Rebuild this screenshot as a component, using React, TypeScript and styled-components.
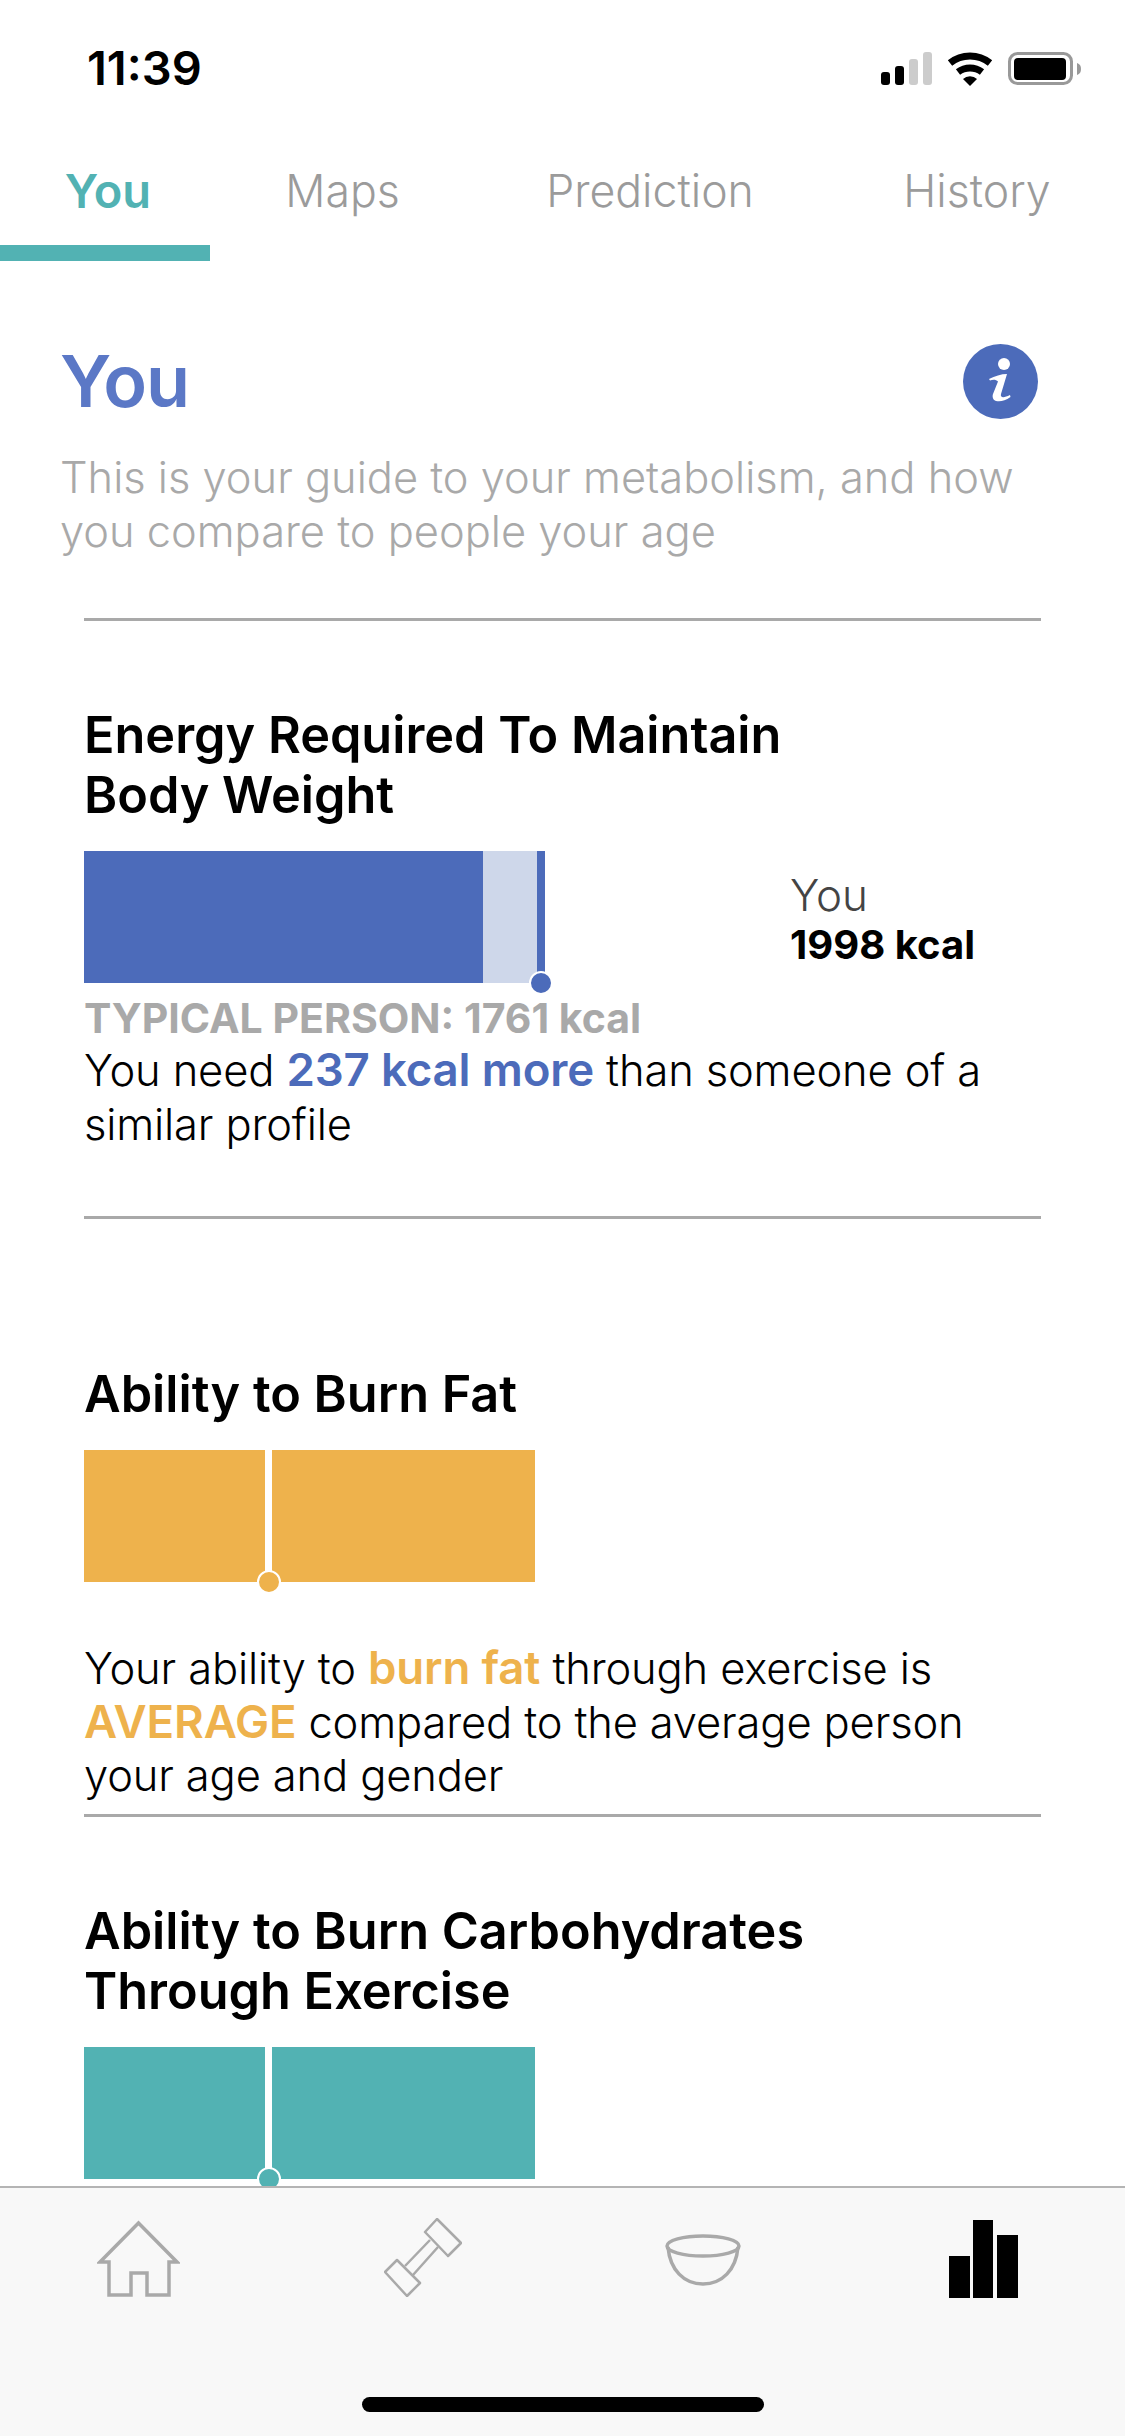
import React from 'react';
import styled, { createGlobalStyle } from 'styled-components';

const BLUE = '#4c6bba';
const ORANGE = '#eeb24c';
const TEAL = '#52b2b3';
const GREY = '#a9a9a9';

const GlobalStyle = createGlobalStyle`
  html, body {
    margin: 0;
    padding: 0;
    background: #fff;
  }
  * {
    box-sizing: border-box;
  }
`;

const Screen = styled.div`
  width: 1125px;
  height: 2436px;
  display: flex;
  flex-direction: column;
  overflow: hidden;
  background: #fff;
  color: #000;
  font-family: Inter, "Liberation Sans", sans-serif;
`;

const StatusBar = styled.div`
  height: 133px;
  flex: none;
  display: flex;
  justify-content: space-between;
  padding: 45px 44px 0 87px;
`;

const Clock = styled.div`
  font-size: 47px;
  line-height: 46px;
  font-weight: 600;
`;

const StatusIcons = styled.svg`
  display: block;
  margin-top: 7px;
`;

const Tabs = styled.div`
  flex: none;
  display: grid;
  grid-template-columns: 210px 265px 350px 304px;
  height: 128px;
`;

const Tab = styled.div<{ $active?: boolean }>`
  text-align: center;
  padding: 31px 0 0 ${p => (p.$active ? 6 : 0)}px;
  font-size: ${p => (p.$active ? 47 : 44.6)}px;
  line-height: 54px;
  font-weight: ${p => (p.$active ? 600 : 300)};
  color: ${p => (p.$active ? TEAL : '#9b9b9b')};
  border-bottom: 16px solid ${p => (p.$active ? TEAL : 'transparent')};
`;

const Scroll = styled.div`
  flex: 1;
  min-height: 0;
  overflow: hidden;
`;

const Intro = styled.div`
  padding: 81px 87px 0 60px;
`;

const IntroHead = styled.div`
  display: flex;
  justify-content: space-between;
  align-items: center;
  height: 78px;
`;

const PageTitle = styled.h1`
  margin: 0;
  font-size: 72px;
  line-height: 78px;
  font-weight: 600;
  letter-spacing: -1px;
  color: #5b78c6;
`;

const InfoButton = styled.div`
  width: 75px;
  height: 75px;
  line-height: 0;
`;

const IntroText = styled.p`
  margin: 31px 0 0;
  font-size: 43.4px;
  line-height: 53.5px;
  font-weight: 300;
  color: #a9a9a9;
`;

const Rule = styled.div<{ $top?: number }>`
  height: 3px;
  margin: ${p => p.$top ?? 0}px 84px 0;
  background: ${GREY};
`;

const Section = styled.section<{ $top: number; $bottom: number }>`
  padding: ${p => p.$top}px 84px ${p => p.$bottom}px 84px;
`;

const Title = styled.h2`
  margin: 0;
  max-width: 760px;
  font-size: 50.4px;
  line-height: 60px;
  font-weight: 600;
`;

const ChartRow = styled.div`
  display: flex;
  align-items: flex-start;
  margin: 26px 0 0;
`;

const Bar = styled.div<{ $width: number }>`
  position: relative;
  display: flex;
  width: ${p => p.$width}px;
  height: 132px;
  flex: none;
`;

const Segment = styled.div<{ $color: string; $width?: number }>`
  background: ${p => p.$color};
  flex: ${p => (p.$width ? `0 0 ${p.$width}px` : '1')};
`;

const Dot = styled.span<{ $color: string; $left: number }>`
  position: absolute;
  left: ${p => p.$left}px;
  bottom: -12px;
  width: 24px;
  height: 24px;
  border-radius: 50%;
  background: ${p => p.$color};
  border: 2px solid #fff;
`;

const YouLabel = styled.div`
  margin: 19px 0 0 245px;
  font-size: 44px;
  line-height: 50px;
  font-weight: 300;
  color: #444;
`;

const YouValue = styled.div`
  font-size: 40px;
  line-height: 50px;
  font-weight: 700;
  color: #000;
`;

const Typical = styled.div`
  margin-top: 12px;
  margin-bottom: 3px;
  font-size: 41px;
  line-height: 46px;
  font-weight: 700;
  color: ${GREY};
`;

const Body = styled.p<{ $top?: number }>`
  margin: ${p => p.$top ?? 0}px 0 0;
  font-size: 43.5px;
  line-height: 53.5px;
  font-weight: 300;
  letter-spacing: -0.15px;
`;

const Strong = styled.strong<{ $color: string }>`
  font-size: 45.6px;
  line-height: 1;
  font-weight: 600;
  color: ${p => p.$color};
`;

const TabBar = styled.div`
  flex: none;
  height: 250px;
  position: relative;
  background: #f8f8f8;
  border-top: 2px solid #b4b4b4;
  display: flex;
  align-items: flex-start;
`;

const NavItem = styled.div<{ $left: number; $top: number }>`
  margin-left: ${p => p.$left}px;
  margin-top: ${p => p.$top}px;
  flex: none;
  line-height: 0;
`;

const HomeIndicator = styled.div`
  position: absolute;
  left: 362px;
  bottom: 24px;
  width: 402px;
  height: 15px;
  border-radius: 8px;
  background: #000;
`;

const Signal = () => (
  <StatusIcons width="200" height="34" viewBox="0 0 200 34">
    <rect x="0" y="20" width="9" height="13" rx="3" fill="#000" />
    <rect x="14" y="14" width="9" height="19" rx="3" fill="#000" />
    <rect x="28" y="7" width="9" height="26" rx="3" fill="#ccc" />
    <rect x="42" y="0" width="9" height="33" rx="3" fill="#ccc" />
    <g fill="none" stroke="#000" strokeWidth="7">
      <path d="M69 11 A32 32 0 0 1 109 11" />
      <path d="M77 20 A20 20 0 0 1 101 20" />
    </g>
    <path d="M82 27 A10 10 0 0 1 96 27 L89 34 Z" fill="#000" />
    <rect x="128.5" y="1.5" width="62" height="30" rx="8" fill="none" stroke="#999" strokeWidth="3" />
    <rect x="133" y="6" width="52" height="22" rx="4" fill="#000" />
    <path d="M196 11 C199 12 200 14 200 17 C200 20 199 22 196 23 Z" fill="#999" />
  </StatusIcons>
);

const InfoIcon = () => (
  <svg width="75" height="75" viewBox="0 0 75 75">
    <circle cx="37.5" cy="37.5" r="37.5" fill={BLUE} />
    <circle cx="41" cy="20" r="6" fill="#fff" />
    <path
      d="M26 35 C32 32 38 30 44 30 L38 50 C37 54 41 54 47 51 L47.5 53 C42 57 37 58 33 57 C30 56 29 53 30 50 L35 37.5 C33 35.5 30 35.5 27 36.5 Z"
      fill="#fff"
    />
  </svg>
);

const HomeIcon = () => (
  <svg width="83" height="78" viewBox="0 0 83 78" fill="none" stroke={GREY} strokeWidth="3.5">
    <path d="M41.5 3 L80 42 H72 V75 H50 V53 H34 V75 H12 V42 H3 Z" />
  </svg>
);

const DumbbellIcon = () => (
  <svg width="78" height="79" viewBox="0 0 78 79" fill="none" stroke={GREY} strokeWidth="2.5" strokeLinejoin="round">
    <path d="M53 1 L77 25 L64 38 L41 14 Z" />
    <path d="M13 42 L36 65 L23 78 L1 54 Z" />
    <path d="M46 22 L21 48 M54 29 L29 57" />
  </svg>
);

const BowlIcon = () => (
  <svg width="78" height="52" viewBox="0 0 78 52" fill="none" stroke={GREY} strokeWidth="3.5">
    <ellipse cx="39" cy="12" rx="36" ry="10" />
    <path d="M4 13 C6 36 20 50 39 50 C58 50 72 36 74 13" />
  </svg>
);

const StatsIcon = () => (
  <svg width="69" height="78" viewBox="0 0 69 78" fill="#000">
    <rect x="0" y="36" width="21" height="42" />
    <rect x="24" y="0" width="20" height="78" />
    <rect x="48" y="15" width="21" height="63" />
  </svg>
);

export default function App() {
  return (
    <Screen>
      <GlobalStyle />
      <StatusBar>
        <Clock>11:39</Clock>
        <Signal />
      </StatusBar>
      <Tabs>
        <Tab $active>You</Tab>
        <Tab>Maps</Tab>
        <Tab>Prediction</Tab>
        <Tab>History</Tab>
      </Tabs>
      <Scroll>
        <Intro>
          <IntroHead>
            <PageTitle>You</PageTitle>
            <InfoButton><InfoIcon /></InfoButton>
          </IntroHead>
          <IntroText>
            This is your guide to your metabolism, and how
            <br />
            you compare to people your age
          </IntroText>
        </Intro>
        <Rule $top={60} />
        <Section $top={84} $bottom={65}>
          <Title>Energy Required To Maintain Body Weight</Title>
          <ChartRow>
            <Bar $width={461}>
              <Segment $color={BLUE} $width={399} />
              <Segment $color="#ced7ea" $width={54} />
              <Segment $color={BLUE} />
              <Dot $color={BLUE} $left={445} />
            </Bar>
            <YouLabel>
              You
              <YouValue>1998 kcal</YouValue>
            </YouLabel>
          </ChartRow>
          <Typical>TYPICAL PERSON: 1761 kcal</Typical>
          <Body>
            You need <Strong $color={BLUE}>237 kcal more</Strong> than someone of a similar profile
          </Body>
        </Section>
        <Rule />
        <Section $top={145} $bottom={11}>
          <Title>Ability to Burn Fat</Title>
          <ChartRow>
            <Bar $width={451}>
              <Segment $color={ORANGE} $width={181} />
              <Segment $color="#fff" $width={7} />
              <Segment $color={ORANGE} />
              <Dot $color={ORANGE} $left={173} />
            </Bar>
          </ChartRow>
          <Body $top={60}>
            Your ability to <Strong $color={ORANGE}>burn fat</Strong> through exercise is{' '}
            <Strong $color={ORANGE}>AVERAGE</Strong> compared to the average person your age and gender
          </Body>
        </Section>
        <Rule />
        <Section $top={84} $bottom={0}>
          <Title>Ability to Burn Carbohydrates Through Exercise</Title>
          <ChartRow>
            <Bar $width={451}>
              <Segment $color={TEAL} $width={181} />
              <Segment $color="#fff" $width={7} />
              <Segment $color={TEAL} />
              <Dot $color={TEAL} $left={173} />
            </Bar>
          </ChartRow>
        </Section>
      </Scroll>
      <TabBar>
        <NavItem $left={97} $top={32}><HomeIcon /></NavItem>
        <NavItem $left={204} $top={30}><DumbbellIcon /></NavItem>
        <NavItem $left={202} $top={46}><BowlIcon /></NavItem>
        <NavItem $left={207} $top={32}><StatsIcon /></NavItem>
        <HomeIndicator />
      </TabBar>
    </Screen>
  );
}
